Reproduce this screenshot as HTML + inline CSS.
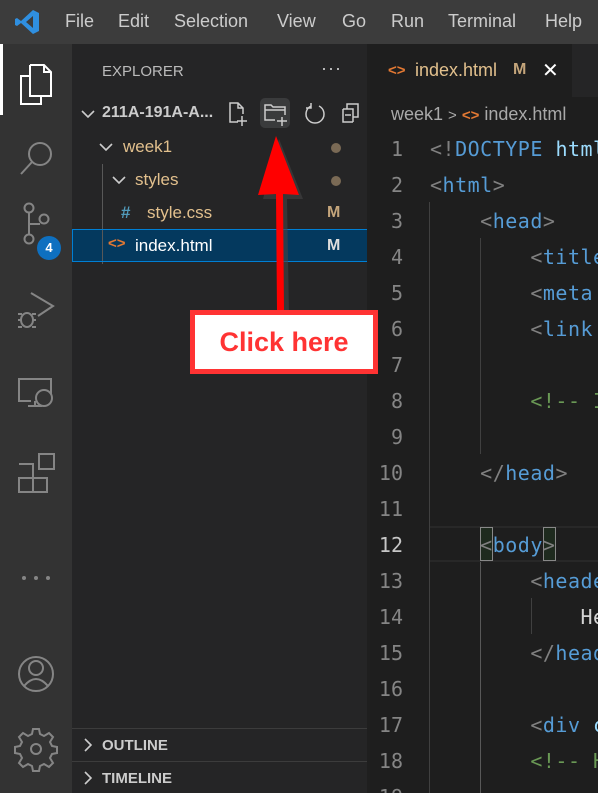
<!DOCTYPE html>
<html style="width:598px;height:793px;overflow:hidden"><head><meta charset="utf-8"><style>
*{margin:0;padding:0;box-sizing:border-box}
body{width:598px;height:793px;overflow:hidden;background:#1e1e1e;font-family:"Liberation Sans",sans-serif;position:relative}
.a{position:absolute}
#title{left:0;top:0;width:598px;height:44px;background:#3c3c3c}
.menu{top:11px;color:#cccccc;font-size:18px}
#act{left:0;top:44px;width:72px;height:749px;background:#333333}
#side{left:72px;top:44px;width:296px;height:749px;background:#252526}
.st{color:#cccccc;font-size:17px}
.mono{font-family:"DejaVu Sans Mono","Liberation Mono",monospace;font-size:20px;letter-spacing:0.5px;white-space:pre}
.ln{color:#858585;width:36px;text-align:right;left:367px;letter-spacing:0}
.t{color:#569cd6}.g{color:#808080}.c{color:#6a9955}.w{color:#d4d4d4}
</style></head><body>
<div id="title" class="a"></div>
<svg class="a" style="left:14px;top:9px" width="26" height="26" viewBox="0 0 26 26"><path d="M19 1 L25 4 V22 L19 25 L7 14 L3 17 L1 16 V10 L3 9 L7 12 Z M19 7 L12 13 L19 19 Z" fill="#2f8fe0"/></svg>
<span class="a menu" style="left:65px">File</span>
<span class="a menu" style="left:118px">Edit</span>
<span class="a menu" style="left:174px">Selection</span>
<span class="a menu" style="left:277px">View</span>
<span class="a menu" style="left:342px">Go</span>
<span class="a menu" style="left:391px">Run</span>
<span class="a menu" style="left:448px">Terminal</span>
<span class="a menu" style="left:545px">Help</span>

<div id="act" class="a"></div>
<div class="a" style="left:0;top:44px;width:3px;height:71px;background:#fff"></div>
<svg class="a" style="left:0;top:44px" width="72" height="749" viewBox="0 0 72 749" fill="none" stroke-width="2">
<g stroke="#fff"><path d="M30 21 H44 L51 28 V52 H40"/><path d="M30 21 V52 H40 M30 52"/><path d="M29 32 H21 V60 H41 V52"/><path d="M44 21 V28 H51"/></g>
<g stroke="#858585">
<circle cx="40" cy="110" r="11"/><path d="M32 118 L21 130"/>
<circle cx="29" cy="164" r="4.5"/><circle cx="29" cy="195" r="4.5"/><circle cx="44" cy="175" r="4.5"/><path d="M29 169 V190 M29 180 H40"/>
<path d="M31 249 L53 262 L38 272"/><ellipse cx="27" cy="276" rx="6" ry="7"/><path d="M18 270 h4 M32 270 h4 M18 283 h4 M32 283 h4 M18 276 h3 M33 276h3"/>
<path d="M31 357 H19 V335 H51 V350 M28 362 H42 M35 357 V362"/><circle cx="44" cy="354" r="8"/>
<path d="M19 434 H33 V448 H19 Z M19 420 H33 V434 M33 434 H47 V448 H33"/><rect x="39" y="410" width="15" height="15"/>
<circle cx="36" cy="630" r="17"/><circle cx="36" cy="624" r="7"/><path d="M24 642 Q36 628 48 642"/>
<circle cx="36" cy="705" r="5"/><path d="M33 685 h6 l1 5 4 2 5-3 4 4-3 5 2 4 5 1 v6 l-5 1-2 4 3 5-4 4-5-3-4 2-1 5 h-6 l-1-5-4-2-5 3-4-4 3-5-2-4-5-1 v-6 l5-1 2-4-3-5 4-4 5 3 4-2z"/>
</g>
<g fill="#858585"><circle cx="24" cy="534" r="2"/><circle cx="36" cy="534" r="2"/><circle cx="48" cy="534" r="2"/></g>
</svg>
<div class="a" style="left:37px;top:236px;width:24px;height:24px;border-radius:12px;background:#0e70c0;color:#fff;font-size:13px;font-weight:bold;text-align:center;line-height:24px">4</div>

<div id="side" class="a"></div>
<span class="a" style="left:102px;top:63px;color:#bbbbbb;font-size:15px">EXPLORER</span>
<span class="a" style="left:321px;top:58px;color:#ccc;font-size:18px;letter-spacing:1px">···</span>
<svg class="a" style="left:78px;top:105px" width="20" height="20" viewBox="0 0 20 20"><path d="M4 6 L10 12 L16 6" stroke="#ccc" stroke-width="1.6" fill="none"/></svg>
<span class="a" style="left:102px;top:104px;color:#ccc;font-size:16px;font-weight:bold">211A-191A-A...</span>
<div class="a" style="left:260px;top:98px;width:30px;height:30px;border-radius:5px;background:#3a3b3c"></div>
<svg class="a" style="left:225px;top:98px" width="140" height="30" viewBox="0 0 140 30" fill="none" stroke="#ccc" stroke-width="1.5">
<path d="M13 24 H5 V5 H13 L18 10 V16 M13 5 V10 H18 M17 18 V28 M12 23 H22"/>
<path d="M50 22 H40 V7 H46 L48 9 H60 V17 M40 12 H60 M57 19 V28 M52 23 H62"/>
<path d="M94 8 A9 9 0 1 1 86 8 M86 5 V10 H81"/>
<path d="M118 11 V24 H128 M118 11 H128 V24 M122 11 V6 H133 V19 H128 M120 17 H126"/>
</svg>
<svg class="a" style="left:96px;top:138px" width="20" height="20" viewBox="0 0 20 20"><path d="M4 6 L10 12 L16 6" stroke="#ccc" stroke-width="1.6" fill="none"/></svg>
<span class="a st" style="left:123px;top:137px;color:#e2c08d">week1</span>
<div class="a" style="left:331px;top:143px;width:10px;height:10px;border-radius:5px;background:#7a6a55"></div>
<div class="a" style="left:102px;top:164px;width:1px;height:100px;background:#585858"></div>
<svg class="a" style="left:109px;top:171px" width="20" height="20" viewBox="0 0 20 20"><path d="M4 6 L10 12 L16 6" stroke="#ccc" stroke-width="1.6" fill="none"/></svg>
<span class="a st" style="left:135px;top:170px;color:#e2c08d">styles</span>
<div class="a" style="left:331px;top:176px;width:10px;height:10px;border-radius:5px;background:#7a6a55"></div>
<span class="a" style="left:121px;top:203px;color:#519aba;font-size:17px;font-weight:bold">#</span>
<span class="a st" style="left:147px;top:203px;color:#e2c08d">style.css</span>
<span class="a" style="left:327px;top:204px;color:#c4a57b;font-size:16px;font-weight:bold">M</span>
<div class="a" style="left:72px;top:229px;width:296px;height:33px;background:#04395e;border:1px solid #007fd4"></div>
<div class="a" style="left:102px;top:230px;width:1px;height:31px;background:#585858"></div>
<span class="a" style="left:108px;top:235px;color:#e37933;font-size:15px;font-weight:bold">&lt;&gt;</span>
<span class="a st" style="left:135px;top:236px;color:#fff">index.html</span>
<span class="a" style="left:327px;top:237px;color:#ddd;font-size:16px;font-weight:bold">M</span>
<div class="a" style="left:72px;top:728px;width:296px;height:1px;background:#3c3c3c"></div>
<div class="a" style="left:72px;top:761px;width:296px;height:1px;background:#3c3c3c"></div>
<svg class="a" style="left:80px;top:736px" width="16" height="50" viewBox="0 0 16 50" fill="none" stroke="#ccc" stroke-width="1.6"><path d="M5 3 L11 9 L5 15 M5 36 L11 42 L5 48"/></svg>
<span class="a" style="left:102px;top:737px;color:#ccc;font-size:15px;font-weight:bold">OUTLINE</span>
<span class="a" style="left:102px;top:770px;color:#ccc;font-size:15px;font-weight:bold">TIMELINE</span>
<div class="a" style="left:367px;top:44px;width:3px;height:749px;background:#1f1f1f"></div>

<div class="a" style="left:370px;top:44px;width:228px;height:53px;background:#252526"></div>
<div class="a" style="left:370px;top:44px;width:202px;height:53px;background:#1e1e1e"></div>
<span class="a" style="left:388px;top:62px;color:#e37933;font-size:15px;font-weight:bold">&lt;&gt;</span>
<span class="a" style="left:415px;top:60px;color:#e2c08d;font-size:18px">index.html</span>
<span class="a" style="left:513px;top:61px;color:#c4a57b;font-size:16px;font-weight:bold">M</span>
<span class="a" style="left:542px;top:58px;color:#fff;font-size:20px">✕</span>
<span class="a" style="left:391px;top:104px;color:#a9a9a9;font-size:18px">week1 <span style="font-size:15px">&gt;</span> <span style="color:#e37933;font-size:15px;font-weight:bold">&lt;&gt;</span> index.html</span>

<div class="a" style="left:430px;top:526px;width:168px;height:36px;border-top:2px solid #282828;border-bottom:2px solid #282828"></div>
<div class="a" style="left:429px;top:202px;width:1px;height:591px;background:#404040"></div>
<div class="a" style="left:480px;top:238px;width:1px;height:216px;background:#404040"></div>
<div class="a" style="left:480px;top:562px;width:1px;height:231px;background:#585858"></div>
<div class="a" style="left:531px;top:598px;width:1px;height:36px;background:#404040"></div>
<div class="a" style="left:480px;top:527px;width:13px;height:34px;border:1px solid #888;background:#1e2a1e"></div>
<div class="a" style="left:543px;top:527px;width:13px;height:34px;border:1px solid #888;background:#1e2a1e"></div>

<div class="a mono ln" style="top:131px;line-height:36px;color:#858585">1
2
3
4
5
6
7
8
9
10
11
<span style="color:#c6c6c6">12</span>
13
14
15
16
17
18
19</div>
<div class="a mono" style="left:430px;top:131px;line-height:36px"><span class="g">&lt;!</span><span class="t">DOCTYPE</span> <span style="color:#9cdcfe">html</span>
<span class="g">&lt;</span><span class="t">html</span><span class="g">&gt;</span>
    <span class="g">&lt;</span><span class="t">head</span><span class="g">&gt;</span>
        <span class="g">&lt;</span><span class="t">title</span>
        <span class="g">&lt;</span><span class="t">meta</span>
        <span class="g">&lt;</span><span class="t">link</span>

        <span class="c">&lt;!-- I</span>

    <span class="g">&lt;/</span><span class="t">head</span><span class="g">&gt;</span>

    <span class="g">&lt;</span><span class="t">body</span><span class="g">&gt;</span>
        <span class="g">&lt;</span><span class="t">header</span>
            <span class="w">He</span>
        <span class="g">&lt;/</span><span class="t">head</span>

        <span class="g">&lt;</span><span class="t">div</span> <span style="color:#9cdcfe">c</span>
        <span class="c">&lt;!-- H</span></div>

<svg class="a" style="left:250px;top:130px" width="60" height="190" viewBox="0 0 60 190">
<path d="M26 6 L50 66 L34 66 L36 182 L29 182 L27 66 L10 66 Z" fill="#444" opacity=".6" transform="translate(3,3)"/>
<path d="M26 6 L49 65 L33 64 L34 182 L27 182 L26 64 L8 65 Z" fill="#ff0000"/>
</svg>
<div class="a" style="left:190px;top:310px;width:188px;height:64px;background:#fff;border:5px solid #ff3333;color:#ff3333;font-size:27px;font-weight:bold;text-align:center;line-height:54px">Click here</div>
</body></html>
